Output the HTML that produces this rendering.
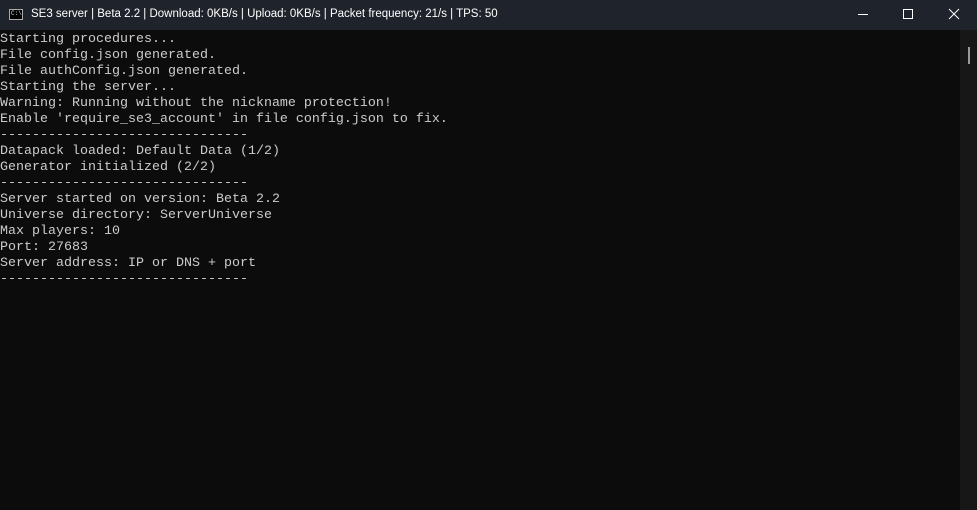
<!DOCTYPE html>
<html><head><style>
html,body{margin:0;padding:0;width:977px;height:510px;overflow:hidden;background:#0c0c0c}
#tb{position:absolute;left:0;top:0;width:977px;height:30px;background:#1f232b}
#tb .t{position:absolute;left:31px;top:8px;font:11.5px "Liberation Sans",sans-serif;color:#fff;white-space:nowrap}
#ic{position:absolute;left:9px;top:9px;width:14px;height:11px;background:#000;border:1px solid #aaa;box-sizing:border-box}
#ic span{position:absolute;left:1px;top:1px;font:6px "Liberation Mono",monospace;color:#ddd;line-height:6px}
#con{position:absolute;left:0;top:32px;margin:0;font:13.33px/16px "Liberation Mono",monospace;color:#cccccc;white-space:pre}
#sb{position:absolute;left:960px;top:30px;width:17px;height:480px;background:#171717}
#th{position:absolute;left:968px;top:47px;width:2px;height:17px;background:#9a9a9a}
</style></head><body>
<div id="tb"><div id="ic"><span>C:\</span></div><div class="t">SE3 server | Beta 2.2 | Download: 0KB/s | Upload: 0KB/s | Packet frequency: 21/s | TPS: 50</div>
<svg style="position:absolute;left:858px;top:9px" width="12" height="12"><line x1="0" y1="5.5" x2="10" y2="5.5" stroke="#fff" stroke-width="1"/></svg>
<svg style="position:absolute;left:902px;top:8px" width="12" height="12"><rect x="1.5" y="1.5" width="9" height="9" fill="none" stroke="#fff" stroke-width="1"/></svg>
<svg style="position:absolute;left:948px;top:8px" width="12" height="12"><path d="M1 1L11 11M11 1L1 11" stroke="#fff" stroke-width="1"/></svg>
</div>
<pre id="con">Starting procedures...
File config.json generated.
File authConfig.json generated.
Starting the server...
Warning: Running without the nickname protection!
Enable 'require_se3_account' in file config.json to fix.
-------------------------------
Datapack loaded: Default Data (1/2)
Generator initialized (2/2)
-------------------------------
Server started on version: Beta 2.2
Universe directory: ServerUniverse
Max players: 10
Port: 27683
Server address: IP or DNS + port
-------------------------------</pre>
<div id="sb"></div><div id="th"></div>
</body></html>
